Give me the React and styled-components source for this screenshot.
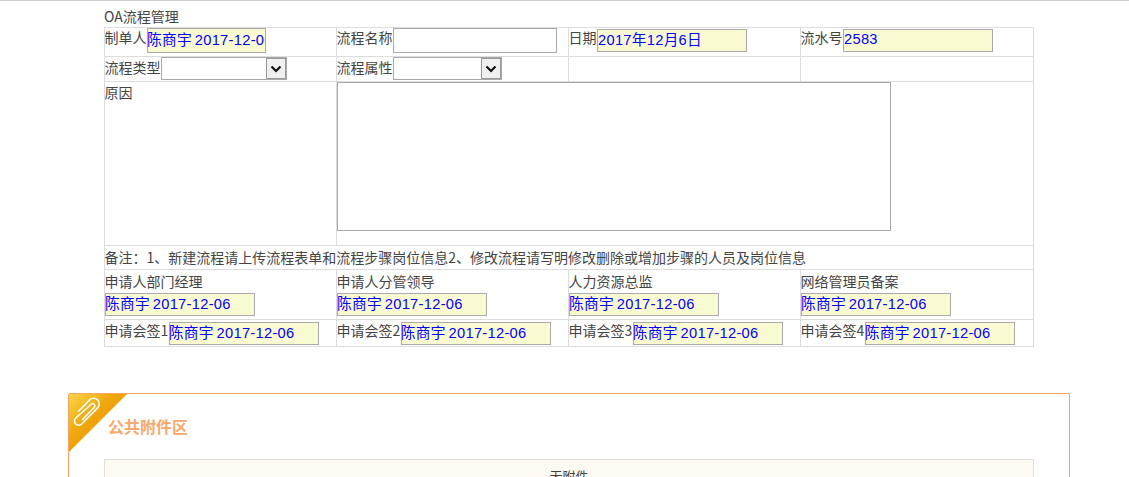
import React from "react";
import styled, { createGlobalStyle } from "styled-components";

const Global = createGlobalStyle`
  html, body { margin: 0; padding: 0; height: 477px; overflow: hidden; background: #fff; }
  body { font-family: "Noto Sans CJK SC", "Liberation Sans", sans-serif; font-size: 14px; color: #444; }
`;
const Page = styled.div`
  border-top: 1px solid #ccc;
  padding: 8px 59px 0 68px;
`;
const FormArea = styled.div`
  padding: 0 36px;
`;
const Title = styled.div`
  height: 18px;
  line-height: 14px;
  font-size: 14px;
`;
const Table = styled.table`
  border-collapse: collapse;
  table-layout: fixed;
  width: 929px;
`;
const Row = styled.tr`
  height: ${(p) => p.$h}px;
`;
const Cell = styled.td`
  border: 1px solid #ddd;
  padding: 0;
  vertical-align: top;
  line-height: 20px;
  white-space: nowrap;
  overflow: hidden;
`;
const Inline = styled.div`
  display: flex;
  align-items: flex-start;
`;
const Label = styled.span`
  display: block;
  height: 20px;
  line-height: 18px;
  margin-top: ${(p) => p.$top ?? 0}px;
  margin-left: -0.5px;
  margin-right: 0.5px;
`;
const ValueBox = styled.input`
  box-sizing: border-box;
  display: block;
  width: ${(p) => p.$w}px;
  height: ${(p) => p.$h ?? 23}px;
  margin-top: ${(p) => p.$top ?? 1}px;
  padding: 0 0 4px;
  border: 1px solid #aaa;
  background: #fafad2;
  color: #00f;
  font-family: "Liberation Sans", "Noto Sans CJK SC", sans-serif;
  font-size: 14.67px;
  letter-spacing: 0.3px;
  word-spacing: -1.5px;
  outline: none;
`;
const StampBox = styled(ValueBox)`
  text-indent: -1px;
`;
const TextBox = styled.input`
  box-sizing: border-box;
  display: block;
  width: 164px;
  height: 25px;
  padding: 0;
  border: 1px solid #a9a9a9;
  background: #fff;
`;
const SelectBox = styled.div`
  box-sizing: border-box;
  display: flex;
  justify-content: flex-end;
  width: ${(p) => p.$w}px;
  height: 23px;
  border: 1px solid #a9a9a9;
  background: #fff;
`;
const SelectArrow = styled.div`
  box-sizing: border-box;
  width: 20px;
  display: flex;
  align-items: center;
  justify-content: center;
  background: #f0f0f0;
  border: 1px solid #999;
`;
const Area = styled.textarea`
  box-sizing: border-box;
  display: block;
  width: 554px;
  height: 149px;
  padding: 0;
  border: 1px solid #a9a9a9;
  resize: none;
  outline: none;
`;
const Stack = styled.div`
  padding-top: 2px;
`;
const Card = styled.section`
  position: relative;
  box-sizing: border-box;
  height: 200px;
  margin-top: 46px;
  padding: 65px 35px 0;
  border: 1px solid #f4a460;
  border-radius: 2px 2px 0 0;
`;
const Ribbon = styled.svg`
  position: absolute;
  left: 0;
  top: 0;
  width: 58px;
  height: 58px;
`;
const CardTitle = styled.h3`
  position: absolute;
  left: 39px;
  top: 21px;
  margin: 0;
  font-size: 16px;
  line-height: 22px;
  font-weight: 700;
  color: #f8a868;
`;
const Attach = styled.div`
  box-sizing: border-box;
  width: 930px;
  height: 80px;
  border: 1px solid #e0dedb;
  background: #fcf9f2;
  padding-top: 6px;
  text-align: center;
  font-size: 13px;
  line-height: 20px;
`;

const Chevron = () => (
  <svg width="12" height="8" viewBox="0 0 12 8">
    <path d="M1.5 1.500 6 6l4.500-4.500" fill="none" stroke="#111" strokeWidth="2.2" />
  </svg>
);
const Select = ({ w }) => (
  <SelectBox $w={w}>
    <SelectArrow><Chevron /></SelectArrow>
  </SelectBox>
);
const STAMP = "陈商宇 2017-12-06";
const Sign = ({ label }) => (
  <Cell>
    <Inline>
      <Label $top={1}>{label}</Label>
      <StampBox readOnly $w={150} $top={2} defaultValue={STAMP} />
    </Inline>
  </Cell>
);
const Approve = ({ label }) => (
  <Cell>
    <Stack>
      <Label>{label}</Label>
      <StampBox readOnly $w={150} $top={1} defaultValue={STAMP} />
    </Stack>
  </Cell>
);

export default function App() {
  return (
    <>
      <Global />
      <Page>
        <FormArea>
          <Title>OA流程管理</Title>
          <Table>
            <colgroup>
              <col width="232" /><col width="232" /><col width="232" /><col width="233" />
            </colgroup>
            <tbody>
              <Row $h={29}>
                <Cell><Inline><Label>制单人</Label><StampBox readOnly $w={119} $h={25} $top={0} defaultValue={STAMP} /></Inline></Cell>
                <Cell><Inline><Label>流程名称</Label><TextBox /></Inline></Cell>
                <Cell><Inline><Label>日期</Label><ValueBox readOnly $w={150} defaultValue="2017年12月6日" /></Inline></Cell>
                <Cell><Inline><Label>流水号</Label><ValueBox readOnly $w={150} defaultValue="2583" /></Inline></Cell>
              </Row>
              <Row $h={25}>
                <Cell><Inline><Label $top={1}>流程类型</Label><Select w={126} /></Inline></Cell>
                <Cell><Inline><Label $top={1}>流程属性</Label><Select w={109} /></Inline></Cell>
                <Cell />
                <Cell />
              </Row>
              <Row $h={164}>
                <Cell><Label $top={1}>原因</Label></Cell>
                <Cell colSpan={3}><Area /></Cell>
              </Row>
              <Row $h={24}>
                <Cell colSpan={4}><Label $top={2}>备注：1、新建流程请上传流程表单和流程步骤岗位信息2、修改流程请写明修改删除或增加步骤的人员及岗位信息</Label></Cell>
              </Row>
              <Row $h={50}>
                <Approve label="申请人部门经理" />
                <Approve label="申请人分管领导" />
                <Approve label="人力资源总监" />
                <Approve label="网络管理员备案" />
              </Row>
              <Row $h={27}>
                <Sign label="申请会签1" />
                <Sign label="申请会签2" />
                <Sign label="申请会签3" />
                <Sign label="申请会签4" />
              </Row>
            </tbody>
          </Table>
        </FormArea>
        <Card>
          <Ribbon viewBox="0 0 58 58">
            <defs>
              <linearGradient id="rib" x1="0" y1="0" x2="0.6" y2="0.6">
                <stop offset="0" stopColor="#f8d548" />
                <stop offset="0.6" stopColor="#f0aa10" />
                <stop offset="1" stopColor="#ec9800" />
              </linearGradient>
            </defs>
            <path d="M0 0H58L0 58Z" fill="url(#rib)" />
            <path transform="translate(-2.2 -1.800) scale(1.120)" d="M14 24.500 L24.500 13.500 a1.900 1.900 0 0 0 -2.700 -2.700 L8 23 a3.800 3.800 0 0 0 5.400 5.400 L27.500 14 a5 5 0 0 0 -7.100 -7.100 L10.500 17" fill="none" stroke="#fff" strokeWidth="1.400" strokeLinecap="round" />
          </Ribbon>
          <CardTitle>公共附件区</CardTitle>
          <Attach>无附件</Attach>
        </Card>
      </Page>
    </>
  );
}
